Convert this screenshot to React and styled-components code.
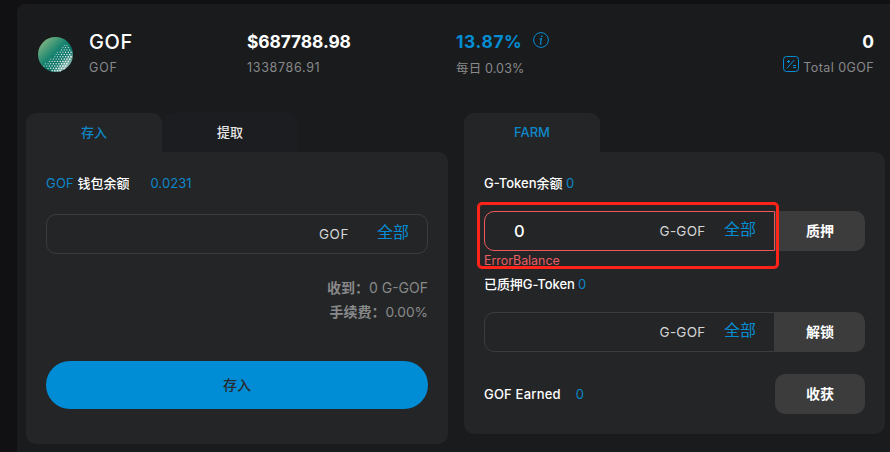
import React from 'react';
import styled, { createGlobalStyle } from 'styled-components';

const GlobalStyle = createGlobalStyle`
  * { box-sizing: border-box; }
  body {
    margin: 0;
    background: #111113;
    color: #fff;
    font-family: Inter, "Noto Sans CJK SC", sans-serif;
    font-size: 12.5px;
    overflow: hidden;
  }
  button, input { font: inherit; color: inherit; margin: 0; padding: 0; border: 0; background: none; outline: 0; }
`;

const Card = styled.main`
  height: 448px;
  margin: 4px 0 0 17px;
  background: #1a1b1d;
  border-top-left-radius: 8px;
`;

const Header = styled.header`
  height: 109px;
  padding: 28px 16px 0 21px;
  display: grid;
  grid-template-columns: 51px 158px 209px 1fr auto;
`;

const Logo = styled.svg`
  width: 35px;
  height: 35px;
  margin-top: 5px;
`;

const Stat = styled.div`
  display: flex;
  flex-direction: column;
  align-items: ${(p) => (p.$end ? 'flex-end' : 'flex-start')};
`;

const Primary = styled.div`
  display: flex;
  height: 20px;
  line-height: 20px;
  font-size: ${(p) => p.$size || 17.4}px;
  font-weight: ${(p) => p.$weight || 700};
  letter-spacing: ${(p) => p.$spacing || 0}px;
  color: ${(p) => (p.$accent ? '#048dd3' : '#fff')};
  white-space: nowrap;
`;

const Secondary = styled.div`
  display: flex;
  height: 20px;
  margin-top: ${(p) => p.$top || 6}px;
  line-height: 20px;
  color: #88898a;
  letter-spacing: ${(p) => p.$spacing || 0}px;
  white-space: nowrap;
`;

const TotalLine = styled.div`
  display: flex;
  margin-top: 4px;
`;

const Icon = styled.svg`
  flex: none;
  width: 16px;
  height: 16px;
  margin: 0 ${(p) => p.$right || 0}px 0 ${(p) => p.$left || 0}px;
  fill: none;
  stroke: #048dd3;
`;

const Columns = styled.div`
  display: grid;
  grid-template-columns: 422px 421px;
  gap: 16px;
  align-items: start;
  padding-left: 9px;
`;

const Tabs = styled.div`
  display: flex;
  height: 39px;
`;

const Tab = styled.button`
  width: 136px;
  line-height: 39px;
  font-size: 13px;
  font-weight: 500;
  border-radius: 10px 10px 0 0;
  background: ${(p) => (p.$active ? '#242527' : '#1c1d20')};
  color: ${(p) => (p.$active ? '#0e87c8' : '#e6e6e6')};
`;

const Panel = styled.section`
  height: ${(p) => p.$height}px;
  padding: 21px 20px 0;
  background: #242527;
  border-radius: 0 10px 10px 10px;
`;

const Label = styled.div`
  display: flex;
  align-items: baseline;
  height: 20px;
  line-height: 20px;
  margin-top: ${(p) => p.$top || 0}px;
  font-size: 13px;
  font-weight: 500;
  letter-spacing: ${(p) => p.$spacing || 0}px;
  white-space: pre;
`;

const Value = styled.span`
  color: #0e87c8;
  font-weight: 400;
  margin-left: ${(p) => p.$left || 0}px;
  letter-spacing: ${(p) => p.$spacing || 0}px;
`;

const Row = styled.div`
  display: flex;
  align-items: center;
  justify-content: space-between;
  height: 40px;
  margin-top: ${(p) => p.$top}px;
`;

const Field = styled.div`
  display: flex;
  flex: 1;
  align-items: center;
  height: 40px;
  min-width: 0;
  padding: 0 18px 0 29px;
  border: 1px solid ${(p) => (p.$error ? '#f0595c' : '#3b3c3e')};
  border-radius: ${(p) => (p.$joined ? '10px 0 0 10px' : '10px')};
`;

const Amount = styled.input`
  flex: 1;
  min-width: 0;
  font-size: 16.5px;
  font-weight: 500;
`;

const Unit = styled.span`
  font-size: 13.5px;
  color: #d5d5d6;
  letter-spacing: ${(p) => p.$spacing || 0}px;
`;

const AllButton = styled.button`
  margin-left: ${(p) => p.$left}px;
  height: 24px;
  line-height: 20px;
  padding-bottom: 4px;
  font-size: 16px;
  color: #048dd3;
`;

const ActionButton = styled.button`
  width: 90px;
  height: 40px;
  padding-bottom: 2px;
  background: #3c3c3d;
  border-radius: ${(p) => (p.$joined ? '0 10px 10px 0' : '10px')};
  font-size: 14px;
  font-weight: 700;
`;

const ErrorText = styled.div`
  height: 18px;
  line-height: 20px;
  font-size: 12.4px;
  color: #ed5c61;
`;

const Fees = styled.div`
  margin-top: 22px;
  text-align: right;
  line-height: 24px;
  font-size: 14px;
  color: #88898a;
`;

const Fee = styled.div`
  b { font-weight: 700; }
`;

const FeeValue = styled.span`
  font-size: ${(p) => p.$size}px;
`;

const DepositButton = styled.button`
  display: block;
  width: 100%;
  height: 48px;
  margin-top: 37px;
  padding-bottom: 2px;
  border-radius: 24px;
  background: #018dd5;
  color: #252b30;
  font-size: 14px;
  font-weight: 500;
`;

const Highlight = styled.div`
  position: absolute;
  left: 477px;
  top: 202px;
  width: 302px;
  height: 67px;
  border: 3px solid #ff2419;
  border-radius: 5px;
  pointer-events: none;
`;

const dots = [];
for (let r = 0; r < 13; r++) {
  for (let c = 0; c < 13; c++) {
    const x = 6 + c * 2.7 + (r % 2) * 1.35;
    const y = 6 + r * 2.3;
    const d = (x + y - 34) / 22;
    if (d > 0 && Math.hypot(x - 17.5, y - 17.5) < 16.8) {
      dots.push({ x, y, r: Math.min(1.1, 0.5 + d * 0.5) });
    }
  }
}

function CoinLogo() {
  return (
    <Logo viewBox="0 0 35 35">
      <defs>
        <linearGradient id="coin" x1="0.1" y1="0.1" x2="0.9" y2="0.9">
          <stop offset="0" stopColor="#83b783" />
          <stop offset="0.45" stopColor="#188370" />
          <stop offset="0.7" stopColor="#087267" />
          <stop offset="1" stopColor="#a9c8c3" />
        </linearGradient>
      </defs>
      <circle cx="17.5" cy="17.5" r="17.5" fill="url(#coin)" />
      {dots.map((d, i) => (
        <circle key={i} cx={d.x} cy={d.y} r={d.r} fill="#e3efeb" />
      ))}
    </Logo>
  );
}

function InfoIcon() {
  return (
    <Icon $left={11} viewBox="0 0 16 16">
      <circle cx="8" cy="8" r="7.4" />
      <path d="M6.6 6.8h1.8l-1 4.7q-.1.9 1.1.4" strokeWidth="1.2" />
      <circle cx="8.8" cy="4.3" r=".9" fill="#048dd3" stroke="none" />
    </Icon>
  );
}

function CalcIcon() {
  return (
    <Icon $right={4} viewBox="0 0 16 16">
      <rect x=".5" y=".5" width="15" height="15" rx="3" />
      <path d="M4 12.2L11.2 4M4 5.5h3M5.5 4v3M10 9.5h3M10 11.5h3" />
    </Icon>
  );
}

export default function App() {
  return (
    <>
      <GlobalStyle />
      <Card>
        <Header>
          <CoinLogo />
          <Stat>
            <Primary $size={20} $weight={500} $spacing={0.6}>GOF</Primary>
            <Secondary $spacing={0.8}>GOF</Secondary>
          </Stat>
          <Stat>
            <Primary $spacing={-0.1}>$687788.98</Primary>
            <Secondary $spacing={0.68}>1338786.91</Secondary>
          </Stat>
          <Stat>
            <Primary $accent $spacing={0.6}>13.87%<InfoIcon /></Primary>
            <Secondary $top={7} $spacing={0.15}>每日 0.03%</Secondary>
          </Stat>
          <Stat $end>
            <Primary>0</Primary>
            <TotalLine>
              <CalcIcon />
              <Secondary $top={2} $spacing={0.42}>Total 0GOF</Secondary>
            </TotalLine>
          </Stat>
        </Header>
        <Columns>
          <div>
            <Tabs>
              <Tab $active>存入</Tab>
              <Tab>提取</Tab>
            </Tabs>
            <Panel $height={292}>
              <Label><Value $spacing={0.2}>GOF</Value> 钱包余额<Value $left={21} $spacing={0.1}>0.0231</Value></Label>
              <Row $top={21}>
                <Field>
                  <Amount />
                  <Unit $spacing={0.55}>GOF</Unit>
                  <AllButton $left={28}>全部</AllButton>
                </Field>
              </Row>
              <Fees>
                <Fee><b>收到：</b><FeeValue $size={14}>0 G-GOF</FeeValue></Fee>
                <Fee><b>手续费：</b><FeeValue $size={13.7}>0.00%</FeeValue></Fee>
              </Fees>
              <DepositButton>存入</DepositButton>
            </Panel>
          </div>
          <div>
            <Tabs>
              <Tab $active>FARM</Tab>
            </Tabs>
            <Panel $height={282}>
              <Label>G-Token余额 <Value>0</Value></Label>
              <Row $top={18}>
                <Field $error $joined>
                  <Amount defaultValue="0" />
                  <Unit $spacing={0.25}>G-GOF</Unit>
                  <AllButton $left={18.5}>全部</AllButton>
                </Field>
                <ActionButton $joined>质押</ActionButton>
              </Row>
              <ErrorText>ErrorBalance</ErrorText>
              <Label $top={5} $spacing={-0.08}>已质押G-Token <Value>0</Value></Label>
              <Row $top={18}>
                <Field $joined>
                  <Amount />
                  <Unit $spacing={0.25}>G-GOF</Unit>
                  <AllButton $left={18.5}>全部</AllButton>
                </Field>
                <ActionButton $joined>解锁</ActionButton>
              </Row>
              <Row $top={22}>
                <Label $spacing={0.2}>GOF Earned<Value $left={15}>0</Value></Label>
                <ActionButton>收获</ActionButton>
              </Row>
            </Panel>
          </div>
        </Columns>
      </Card>
      <Highlight />
    </>
  );
}
